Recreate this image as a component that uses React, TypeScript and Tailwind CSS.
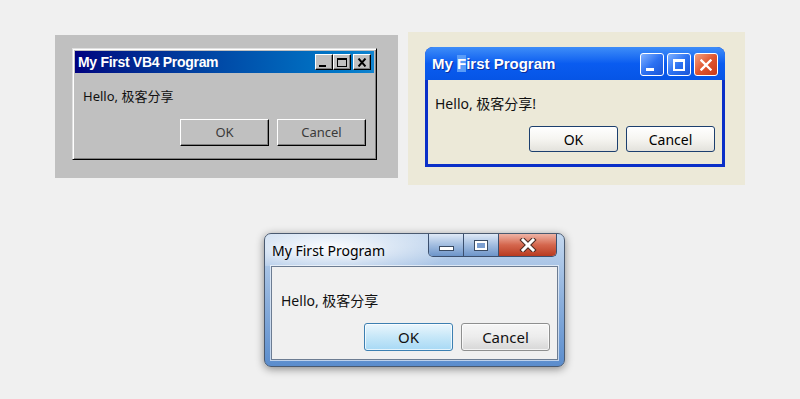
import React from "react";

const sans = { fontFamily: '"Noto Sans", "Noto Sans CJK SC", sans-serif' };

// ---------- Windows 95 style ----------
function ClassicCapButton({ kind }: { kind: "min" | "max" | "close" }) {
    return (
        <div className="w-[18px] h-[16px] bg-[#c0c0c0] border border-t-white border-l-white border-r-black border-b-black shadow-[inset_-1px_-1px_0_#808080] flex items-center justify-center">
            {kind === "min" && <div className="w-[7px] h-[2px] bg-black mt-[7px] mr-[3px]" />}
            {kind === "max" && <div className="w-[10px] h-[9px] border border-black border-t-2" />}
            {kind === "close" && (
                <svg width="10" height="9" viewBox="0 0 10 9">
                    <path d="M1.5 0.5 L8.5 8.5 M8.5 0.5 L1.5 8.5" stroke="#000" strokeWidth="1.9" />
                </svg>
            )}
        </div>
    );
}

function ClassicButton({ label }: { label: string }) {
    return (
        <div className="h-[27px] w-[89px] bg-[#c0c0c0] border border-t-white border-l-white border-r-black border-b-black shadow-[inset_-1px_-1px_0_#808080] flex items-center justify-center text-[13px] text-[#3a3a3a]">
            {label}
        </div>
    );
}

function ClassicWindow() {
    return (
        <div className="w-[305px] h-[112px] bg-[#c0c0c0] border border-t-[#dfdfdf] border-l-[#dfdfdf] border-r-black border-b-black shadow-[inset_1px_1px_0_#ffffff,inset_-1px_-1px_0_#808080] p-[2px] flex flex-col">
            <div className="h-[22px] bg-linear-to-r from-[#000080] to-[#1084d0] flex items-center justify-between pl-[3px] pr-[3px]">
                <span className="text-white font-bold text-[14px] tracking-[-0.3px]" style={{ fontFamily: '"Liberation Sans", sans-serif' }}>
                    My First VB4 Program
                </span>
                <div className="flex items-center">
                    <ClassicCapButton kind="min" />
                    <ClassicCapButton kind="max" />
                    <div className="w-[2px]" />
                    <ClassicCapButton kind="close" />
                </div>
            </div>
            <div className="pl-[8px] mt-[15px] text-[13px] leading-[16px] text-[#111]">Hello, 极客分享</div>
            <div className="flex justify-end gap-[8px] pr-[8px] mt-[15px]">
                <ClassicButton label="OK" />
                <ClassicButton label="Cancel" />
            </div>
        </div>
    );
}

// ---------- Windows XP style ----------
function XpCapButton({ kind }: { kind: "min" | "max" | "close" }) {
    const bg =
        kind === "close"
            ? "bg-linear-to-br from-[#f0a080] via-[#e0552e] to-[#c93a18]"
            : "bg-linear-to-br from-[#7fb0ff] via-[#2d72f2] to-[#1a55d8]";
    return (
        <div className={`w-[24px] h-[23px] rounded-[3px] border border-white ${bg} flex items-center justify-center`}>
            {kind === "min" && <div className="w-[8px] h-[3px] bg-white mt-[9px] mr-[5px]" />}
            {kind === "max" && <div className="w-[12px] h-[12px] border-2 border-white border-t-[3px]" />}
            {kind === "close" && (
                <svg width="12" height="12" viewBox="0 0 12 12">
                    <path d="M1.5 1.5 L10.5 10.5 M10.5 1.5 L1.5 10.5" stroke="#fff" strokeWidth="2.4" strokeLinecap="square" />
                </svg>
            )}
        </div>
    );
}

function XpButton({ label }: { label: string }) {
    return (
        <div className="h-[26px] w-[89px] rounded-[3px] border border-[#1c3f6e] bg-linear-to-b from-white via-[#f6f5f1] to-[#e3e2dc] flex items-center justify-center text-[14px] text-black">
            {label}
        </div>
    );
}

function XpWindow() {
    return (
        <div className="w-[300px] h-[120px] flex flex-col rounded-t-[8px] overflow-hidden bg-[#0a2fc8]">
            <div className="h-[33px] bg-linear-to-b from-[#3e8df8] via-[#0a5cf0] to-[#0655e6] flex items-start justify-between pl-[7px] pr-[7px] pt-[6px]">
                <span className="text-white font-bold text-[15px] leading-[22px] [text-shadow:1px_1px_0_#0b2e9c]" style={{ fontFamily: '"Liberation Sans", sans-serif' }}>
                    My <span className="bg-[#5a9cf7] [text-shadow:none]">F</span>irst Program
                </span>
                <div className="flex gap-[3px]">
                    <XpCapButton kind="min" />
                    <XpCapButton kind="max" />
                    <XpCapButton kind="close" />
                </div>
            </div>
            <div className="flex-1 mx-[3px] mb-[3px] bg-[#ece9d8] flex flex-col">
                <div className="pl-[7px] mt-[14px] text-[14px] leading-[19px] text-[#111]">Hello, 极客分享!</div>
                <div className="flex justify-end gap-[8px] pr-[7px] mt-[13px]">
                    <XpButton label="OK" />
                    <XpButton label="Cancel" />
                </div>
            </div>
        </div>
    );
}

// ---------- Windows 7 style ----------
function AeroButton({ label, primary }: { label: string; primary?: boolean }) {
    const look = primary
        ? "border-[#3c7fb1] bg-linear-to-b from-[#eaf6fd] via-[#c6e7f8] to-[#a7d9f5]"
        : "border-[#8e8f8f] bg-linear-to-b from-[#f6f6f6] via-[#ececec] to-[#d7d7d7]";
    return (
        <div className={`h-[28px] w-[89px] rounded-[3px] border ${look} shadow-[inset_0_0_0_1px_rgba(255,255,255,0.7)] flex items-center justify-center text-[15px] text-[#111]`}>
            {label}
        </div>
    );
}

function AeroWindow() {
    return (
        <div className="w-[301px] h-[134px] rounded-[7px] border border-[#4a5a70] bg-linear-to-b from-[#c4d8ef] via-[#8db0dc] to-[#5b8dcd] shadow-[0_2px_8px_rgba(0,0,0,0.45)] flex flex-col overflow-hidden">
            <div className="h-[32px] flex items-start justify-between bg-[radial-gradient(ellipse_150px_34px_at_65px_14px,rgba(255,255,255,0.95),rgba(255,255,255,0)_85%)]">
                <span className="pl-[7px] pt-[7px] text-[14px] leading-[20px] text-black [text-shadow:0_0_8px_#fff]">My First Program</span>
                <div className="flex h-[23px] mr-[7px] rounded-b-[5px] border border-t-0 border-[#3b4f6e] overflow-hidden">
                    <div className="w-[35px] bg-linear-to-b from-[#dfe9f6] via-[#a2bde0] to-[#6d95c9] border-r border-[#3b4f6e] flex items-end justify-center pb-[5px]">
                        <div className="w-[15px] h-[5px] bg-white border border-[#3a4b63]" />
                    </div>
                    <div className="w-[35px] bg-linear-to-b from-[#dfe9f6] via-[#a2bde0] to-[#6d95c9] border-r border-[#3b4f6e] flex items-center justify-center">
                        <div className="w-[12px] h-[9px] border-2 border-white outline outline-[#3a4b63] bg-[#7b9ed0]" />
                    </div>
                    <div className="w-[57px] bg-linear-to-b from-[#eeb3a5] via-[#d4664d] to-[#b83a1f] flex items-center justify-center">
                        <svg width="18" height="14" viewBox="0 0 18 14">
                            <path d="M4 2 L14 12 M14 2 L4 12" stroke="#4a2a22" strokeWidth="5" strokeLinecap="square" />
                            <path d="M4 2 L14 12 M14 2 L4 12" stroke="#fff" strokeWidth="3" strokeLinecap="square" />
                        </svg>
                    </div>
                </div>
            </div>
            <div className="flex-1 mx-[6px] mb-[6px] border border-[#6c7c92] shadow-[0_0_0_1px_rgba(255,255,255,0.6)] bg-[#f0f0f0] flex flex-col">
                <div className="pl-[9px] mt-[24px] text-[14px] leading-[19px] text-[#111]">Hello, 极客分享</div>
                <div className="flex justify-end gap-[8px] pr-[7px] mt-[13px]">
                    <AeroButton label="OK" primary />
                    <AeroButton label="Cancel" />
                </div>
            </div>
        </div>
    );
}

export default function App() {
    return (
        <div className="w-[800px] h-[399px] bg-[#f0f0f0] overflow-hidden pt-[32px]" style={sans}>
            <div className="flex items-start pl-[55px]">
                <div className="mt-[3px] w-[343px] h-[143px] bg-[#c0c0c0] pl-[17px] pt-[13px]">
                    <ClassicWindow />
                </div>
                <div className="ml-[10px] w-[337px] h-[153px] bg-[#ece9d8] pl-[17px] pt-[15px]">
                    <XpWindow />
                </div>
            </div>
            <div className="mt-[48px] ml-[264px]">
                <AeroWindow />
            </div>
        </div>
    );
}
